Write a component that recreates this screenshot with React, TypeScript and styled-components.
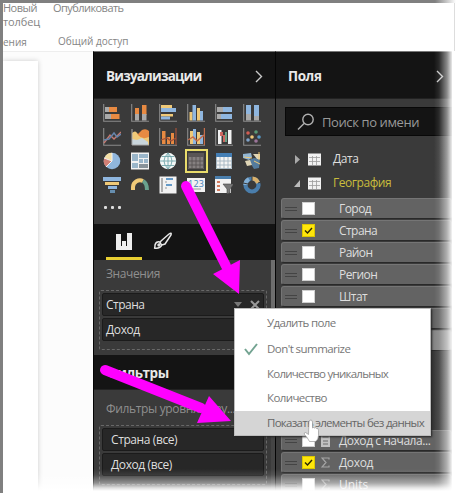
import React from "react";
import styled, { createGlobalStyle } from "styled-components";

const Global = createGlobalStyle`
  * { box-sizing: border-box; }
  html, body { margin: 0; padding: 0; background: #fff; overflow: hidden; }
  body { font-family: "Open Sans", "Noto Sans", sans-serif; font-size: 12px; }
`;

const Page = styled.div`
  position: relative;
  width: 458px;
  height: 493px;
  overflow: hidden;
  border-left: 3px solid #808080;
  display: flex;
  flex-direction: column;
`;
const TopEdge = styled.div`
  height: 3px;
  flex: none;
  background: linear-gradient(90deg, #808080 432px, #fff 453px);
`;
const Text = styled.span<{ $s?: number; $ls?: number }>`
  font-size: ${(p) => p.$s ?? 12}px;
  letter-spacing: ${(p) => p.$ls ?? 0}px;
  white-space: nowrap;
  line-height: 16px;
`;
const Ribbon = styled.div`
  height: 48px;
  flex: none;
  display: grid;
  grid-template-columns: 50px 200px;
  grid-template-rows: 14px 14px 20px;
  color: #858585;
  > span { margin-top: -3px; }
`;
const GroupRow = styled.div`
  grid-column: 1 / 3;
  display: flex;
  padding-top: 2px;
`;
const GroupLabel = styled.div<{ $w: number }>`
  width: ${(p) => p.$w}px;
`;
const Work = styled.div`
  display: flex;
  height: 442px;
`;
const Canvas = styled.div`
  width: 90px;
  background: #fcfcfc;
  border-top: 1px solid #eee;
  padding-top: 9px;
`;
const Sheet = styled.div`
  width: 35px;
  height: 440px;
  background: #fff;
  box-shadow: 0 0 5px #ccc;
`;
const Pane = styled.section<{ $w: number }>`
  width: ${(p) => p.$w}px;
  background: #3a3a3a;
  border-top: 1px solid #777;
  border-left: 1px solid #050505;
  display: flex;
  flex-direction: column;
  overflow: hidden;
`;
const Header = styled.header<{ $h: number; $end?: number }>`
  height: ${(p) => p.$h}px;
  flex: none;
  background: #141414;
  color: #e9e9e9;
  font-weight: 700;
  display: flex;
  align-items: center;
  justify-content: space-between;
  padding: 2px ${(p) => p.$end ?? 12}px 0 12px;
  border-bottom: 1px solid #222;
`;
const Gallery = styled.div`
  height: 125px;
  flex: none;
  padding: 2px 0 0 4px;
`;
const IconGrid = styled.div`
  display: grid;
  grid-template-columns: repeat(6, 28px);
  grid-auto-rows: 24px;
`;
const IconCell = styled.div<{ $on?: boolean }>`
  display: flex;
  align-items: center;
  justify-content: center;
  margin: 0 2.5px;
  outline: ${(p) => (p.$on ? "2px solid #e9dc6b" : "none")};
  outline-offset: -2px;
  svg { flex: none; }
`;
const Dots = styled.div`
  display: flex;
  gap: 4px;
  padding: 9px 0 0 6px;
  i { width: 3px; height: 3px; background: #ddd; border-radius: 1px; }
`;
const Tabs = styled.div`
  height: 36px;
  flex: none;
  background: #141414;
  display: flex;
  gap: 3px;
  padding-left: 12px;
`;
const Tab = styled.div<{ $on?: boolean }>`
  width: 36px;
  display: flex;
  justify-content: center;
  align-items: center;
  padding-top: 1px;
  border-bottom: 3px solid ${(p) => (p.$on ? "#e8cf32" : "transparent")};
`;
const Section = styled.div<{ $h: number; $top?: number }>`
  height: ${(p) => p.$h}px;
  flex: none;
  color: #8f8f8f;
  padding: ${(p) => p.$top ?? 5}px 4px 0 5px;
  border-right: 4px solid #6d6d6d;
`;
const QuietSection = styled(Section)`
  border-right-color: #444;
`;
const Caption = styled.div`
  padding-left: 7px;
  height: 25px;
`;
const Well = styled.div`
  border: 1px dashed #686868;
  height: 60px;
  padding: 2px;
  border-radius: 2px;
  display: flex;
  flex-direction: column;
  gap: 2px;
`;
const WellItem = styled.div<{ $indent?: number }>`
  height: 23px;
  flex: none;
  background: #272727;
  border: 1px solid #1b1b1b;
  border-radius: 2px;
  color: #dedede;
  display: flex;
  align-items: center;
  padding: 0 3px 0 ${(p) => p.$indent ?? 3}px;
  span { flex: 1; }
  svg { margin-left: 8px; }
`;
const Search = styled.div`
  height: 29px;
  flex: none;
  margin: 8px 0 0 9px;
  background: #141414;
  border: 1px solid #080808;
  display: flex;
  align-items: center;
  gap: 7px;
  padding: 0 11px;
  color: #999;
`;
const Tables = styled.div`
  padding: 11px 0 3px 18px;
`;
const TableRow = styled.div<{ $on?: boolean }>`
  height: 24px;
  display: flex;
  align-items: center;
  color: ${(p) => (p.$on ? "#c9bd3c" : "#dedede")};
  svg:nth-child(2) { margin: 0 12px 0 8px; }
`;
const FieldList = styled.div<{ $top?: number }>`
  margin: ${(p) => p.$top ?? 0}px 0 0 5px;
  display: flex;
  flex-direction: column;
  gap: 1px;
`;
const Field = styled.div<{ $light?: boolean }>`
  height: 21px;
  background: ${(p) => (p.$light ? "#858585" : "#636363")};
  border: 1px solid #757575;
  border-bottom-color: #292929;
  border-radius: 3px;
  display: flex;
  align-items: center;
  padding-left: 3px;
  color: #dedede;
`;
const Grip = styled.i`
  width: 12px;
  height: 4px;
  border-top: 1px solid #444;
  border-bottom: 1px solid #444;
`;
const Box = styled.span<{ $on?: boolean }>`
  width: 13px;
  height: 13px;
  margin: 0 6px 0 5px;
  background: ${(p) => (p.$on ? "#ffe60b" : "#fff")};
  border: 1px solid ${(p) => (p.$on ? "#dcc700" : "#d0d0d0")};
  display: flex;
`;
const Kind = styled.span`
  width: 18px;
  display: flex;
`;
const Menu = styled.div`
  position: absolute;
  left: 231px;
  top: 308px;
  width: 197px;
  height: 128px;
  background: #fff;
  border: 1px solid #bcbcbc;
  box-shadow: 1px 1px 2px #222;
  color: #777;
`;
const MenuItem = styled.div<{ $h: number; $on?: boolean }>`
  height: ${(p) => p.$h}px;
  display: grid;
  grid-template-columns: 32px 162px;
  align-items: center;
  background: ${(p) => (p.$on ? "#d5d5d5" : "#fff")};
  color: ${(p) => (p.$on ? "#666" : "#777")};
  > span { grid-column: 2; }
  > svg { grid-column: 1; grid-row: 1; margin-left: 9px; }
`;
const Overlay = styled.svg`
  position: absolute;
  left: -3px;
  top: 0;
`;
const FadeRight = styled.div`
  position: absolute;
  right: 0;
  top: 51px;
  width: 24px;
  height: 442px;
  background: linear-gradient(90deg, #fff0, #ffffff18 5px, #ffffff80 13px, #ffffffe8 18px, #fff 21px);
`;
const RightLine = styled.div`
  position: absolute;
  right: 3px;
  top: 3px;
  width: 1px;
  height: 48px;
  background: #ddd;
`;
const FadeBottom = styled.div`
  position: absolute;
  left: 0;
  right: 0;
  bottom: 0;
  height: 24px;
  background: linear-gradient(#fff0, #ffffff18 6px, #ffffff70 14px, #ffffffd8 19px, #fff 22px);
`;

const G = "#aaa", O = "#e88a42", B = "#8fb6df", Y = "#efc978", W = "#f2f2f2", D = "#4a7eac";
type Rect = [number, number, number, number, string];
const Bars = ({ r, children }: { r: Rect[]; children?: React.ReactNode }) => (
  <svg width="18" height="18" viewBox="0 0 18 18">
    <path d="M.7 0v17.3H18" fill="none" stroke="#8b8b8b" strokeWidth="1.1" />
    {r.map(([x, y, w, h, c], i) => <rect key={i} x={x} y={y} width={w} height={h} fill={c} />)}
    {children}
  </svg>
);
const Pic = ({ children }: { children: React.ReactNode }) => (
  <svg width="18" height="18" viewBox="0 0 18 18">{children}</svg>
);
const GridPic = ({ head, fill, line }: { head: string; fill: string; line: string }) => (
  <Pic>
    <path d="M1 1h16v16H1z" fill={fill} />
    <path d="M1 1h16v4H1z" fill={head} />
    <path d="M1.5 5v11.5h15V5M1 9h16M1 13h16M5 5v12M9 5v12M13 5v12" fill="none" stroke={line} strokeWidth=".9" />
  </Pic>
);

const icons: React.ReactNode[] = [
  <Bars r={[[2, 3, 4, 5, G], [6, 3, 8, 5, O], [2, 10, 6, 5, G], [8, 10, 8.5, 5, O]]} />,
  <Bars r={[[4, 4, 4, 7, O], [4, 10, 4, 6.5, G], [11, 1, 4.5, 10, O], [11, 10, 4.5, 6.5, G]]} />,
  <Bars r={[[2, 1, 11, 3, Y], [2, 4, 15, 4, B], [2, 10, 12, 2.5, Y], [2, 12.5, 9, 3, B]]} />,
  <Bars r={[[2.5, 8, 3, 8.5, Y], [5.5, 1, 3.5, 15.5, B], [10, 4, 3, 12.5, Y], [13, 7, 3, 9.5, B]]} />,
  <Bars r={[[2, 3, 6, 5, G], [8, 3, 9, 5, B], [2, 10, 4, 5, G], [6, 10, 11, 5, B]]} />,
  <Bars r={[[3, 1, 5, 9, B], [3, 10, 5, 6.5, G], [11, 1, 5, 11, B], [11, 12, 5, 4.5, G]]} />,
  <Bars r={[]}>
    <path d="m1 15 6-8 4 4 7-7" fill="none" stroke="#c47a71" strokeWidth="1.4" />
    <path d="m1 12 5-1 5-6 3 4 4-3" fill="none" stroke="#6685ac" strokeWidth="1.4" />
  </Bars>,
  <Pic>
    <path d="M1 8Q4 2 7 6l4-4q4-2 7 1v13H1z" fill={O} />
    <path d="M1 5q4-4 6 2 4 5 11 2v8H1z" fill={Y} />
    <path d="m1 11 5 1 5-2 6 4v3H1z" fill="#c9d6dc" />
    <path d="M1 1v16h17" fill="none" stroke={G} />
  </Pic>,
  <Bars r={[[3, 3, 3.5, 13, O], [8, 9, 3, 7, O], [12, 5, 3, 11, O]]}>
    <path d="m2 12 6-2 4 3 5-3M17 0v17" fill="none" stroke="#a45138" strokeWidth="1.2" />
  </Bars>,
  <Bars r={[[3, 3, 3, 13, Y], [6, 1, 3, 15, B], [10, 4, 3, 12, Y], [13, 7, 3, 9, B]]}>
    <path d="m1 12 5-3 4 4 7-6M17.5 0v17" fill="none" stroke="#c66c49" strokeWidth="1.4" />
  </Bars>,
  <Bars r={[[3, 2, 3.5, 14, W], [5, 4, 3, 4, "#cc6760"], [8, 7, 2, 7, "#cc6760"], [10, 4, 2, 10, "#69a086"], [13, 2, 3.5, 14, W]]} />,
  <Bars r={[]}>
    {[[5, 5, "#d05c52"], [13, 4, "#589976"], [9, 9, Y], [16, 9, "#5799c6"], [5, 12, "#7fa2c8"], [13, 13, "#9b759a"]].map(([x, y, c], i) => (
      <circle key={i} cx={x} cy={y} r="1.8" fill={c as string} />
    ))}
  </Bars>,
  <Pic>
    <circle cx="9" cy="9" r="8.3" fill="#90b6dc" />
    <path d="M9 9V.7A8.3 8.3 0 0 0 1.4 6z" fill="#f4dfa6" />
    <path d="M9 9 1.4 6A8 8 0 0 0 3 14.8z" fill="#d17f75" />
    <path d="M9 1v8l-6 6M9 9 1 6" stroke={W} fill="none" />
  </Pic>,
  <Pic>
    <path d="M0 .5h18v17H0z" fill={W} />
    <path d="M1 2h6v7H1zm7 0h9v4H8zM1 11h6v5H1zm7-4h4v4H8zm5 0h4v4h-4z" fill="#9ab6ca" />
    <path d="M8 12h9v4H8z" fill="#89939a" />
  </Pic>,
  <Pic>
    <circle cx="9" cy="9" r="8.2" fill="#f4f8f7" />
    <path d="M1 9h16M3 4.5h12M3 13.5h12M9 1v16M9 1q-8 8 0 16M9 1q8 8 0 16" stroke="#6fa5a9" fill="none" strokeWidth=".9" />
  </Pic>,
  <GridPic head="#595555" fill="#858080" line="#575353" />,
  <GridPic head="#457fb5" fill="#f4f4f4" line="#a1b3c0" />,
  <Pic>
    <path d="m0 2 8-1 1 4-3 3-6-2z" fill="#91b5d3" />
    <path d="m6 8 5-2 6 1-1 9-5 1-3-5z" fill="#547b9d" />
    <path d="m2 9 5-1 2 5-5 1zM10 2h7v5h-3z" fill="#dfd5b6" />
    <path d="M16 0v8m-5 1 6 3M1 5l8 1" stroke={Y} />
  </Pic>,
  <Pic>
    <path d="M0 1h18v4H0z" fill={B} /><path d="M2 6h14v3H2z" fill={Y} />
    <path d="M5 10h9v3H5z" fill={B} /><path d="M7 14h5v3H7z" fill="#668eaf" />
  </Pic>,
  <Pic>
    <path d="M2 14v-3a7 7 0 0 1 10-6" fill="none" stroke={Y} strokeWidth="4" />
    <path d="M12 5q4 2 4 9" fill="none" stroke="#69a18e" strokeWidth="4" />
  </Pic>,
  <Pic>
    <path d="M.5.5h17v17H.5z" fill={W} /><path d="M3 2v14" stroke="#999" strokeWidth="1.5" />
    <path d="M7 3h7M7 9h6" stroke="#659ac7" strokeWidth="1.8" /><path d="M7 5v2m0 4v2" stroke="#999" />
  </Pic>,
  <svg width="18" height="18" viewBox="0 0 18 18">
    <path d="M0 2h18v14H0z" fill={W} />
    <text x="1" y="10.5" fontSize="9" fontFamily="Open Sans" fill="#4380b9" textLength="16">123</text>
    <path d="M4 13h10" stroke="#999" />
  </svg>,
  <Pic>
    <path d="M0 0h16v17H0z" fill={W} /><path d="M0 0h16v3H0z" fill={D} />
    <path d="M2 6h3m-3 4h3m-3 4h3" stroke="#d37b5d" strokeWidth="2" />
    <path d="M8 8h11l-4 5v4l-3 1v-5z" fill="#777" stroke="#444" strokeWidth=".6" />
  </Pic>,
  <Pic>
    <circle cx="9" cy="9" r="6.5" fill="none" stroke={D} strokeWidth="4.2" />
    <path d="M9 2.5A6.5 6.5 0 0 1 15 7" fill="none" stroke="#d9b16c" strokeWidth="4.2" />
    <path d="M2.5 9A6.5 6.5 0 0 1 6 3" fill="none" stroke="#82aed4" strokeWidth="4.2" />
    <path d="M9 0v5m6 2 3-1M0 7l5 1" stroke="#3a3a3a" />
  </Pic>,
];

const Chevron = () => (
  <svg width="8" height="13" viewBox="0 0 8 13"><path d="m1 1 5.5 5.5L1 12" stroke="#c9c9c9" fill="none" strokeWidth="1.4" /></svg>
);
const TableIcon = () => (
  <svg width="13" height="13" viewBox="0 0 13 13">
    <path d="M0 .5h13v12H0z" fill="#f1f1f1" />
    <path d="M1 4.5h11M1 8.5h11M4.5 3v9M8.5 3v9" stroke="#9c9c9c" strokeWidth=".8" />
  </svg>
);
const Sigma = () => (
  <svg width="9" height="11" viewBox="0 0 9 11"><path d="M8 2.5V1H1l4 4.5L1 10h7V8.5" stroke="#a5a5a5" fill="none" strokeWidth="1.2" /></svg>
);
const Calc = () => (
  <svg width="9" height="12" viewBox="0 0 9 12"><path d="M0 0h9v12H0z" fill="#c2c2c2" /><path d="M1.5 2h6M2 6h5M2 9h5" stroke="#6a6a6a" /></svg>
);

function FieldRow({ name, on, ls = -0.55, kind, light }: {
  name: string; on?: boolean; ls?: number; kind?: React.ReactNode; light?: boolean;
}) {
  return (
    <Field $light={light}>
      <Grip />
      <Box $on={on}>
        {on && <svg width="11" height="11" viewBox="0 0 11 11"><path d="m2 5.5 2.5 2.5L9 3" stroke="#2b2600" fill="none" strokeWidth="1.4" /></svg>}
      </Box>
      <Kind>{kind}</Kind>
      <Text $ls={ls}>{name}</Text>
    </Field>
  );
}

export default function App() {
  return (
    <>
      <Global />
      <Page>
        <TopEdge />
        <Ribbon>
          <Text $s={11} $ls={-0.5}>Новый</Text>
          <Text $s={11} $ls={-0.55}>Опубликовать</Text>
          <Text $s={11} $ls={-0.1}>толбец</Text>
          <GroupRow>
            <GroupLabel $w={55}><Text $s={10}>ения</Text></GroupLabel>
            <Text $s={10}>Общий доступ</Text>
          </GroupRow>
        </Ribbon>
        <Work>
          <Canvas><Sheet /></Canvas>
          <Pane $w={182}>
            <Header $h={47}><Text $s={13.5} $ls={-0.8}>Визуализации</Text><Chevron /></Header>
            <Gallery>
              <IconGrid>
                {icons.map((icon, i) => <IconCell key={i} $on={i === 15}>{icon}</IconCell>)}
              </IconGrid>
              <Dots><i /><i /><i /></Dots>
            </Gallery>
            <Tabs>
              <Tab $on>
                <svg width="16" height="17" viewBox="0 0 16 17"><path d="M0 1h5v12h1V8h4v5h1V0h5v17H0z" fill="#eee" /></svg>
              </Tab>
              <Tab>
                <svg width="20" height="18" viewBox="0 0 20 18" fill="none" stroke="#e8e8e8" strokeWidth="1.5">
                  <path d="M8 9 16 2q3-2 2 1l-6 9-3 1-2-2zM7 10q-4-1-5 3 0 3-1 3 6 1 8-3" /><circle cx="6" cy="13" r="1" />
                </svg>
              </Tab>
            </Tabs>
            <Section $h={95}>
              <Caption><Text $ls={-0.4}>Значения</Text></Caption>
              <Well>
                <WellItem>
                  <Text $ls={-0.5}>Страна</Text>
                  <svg width="8" height="5"><path d="M0 0h8L4 5z" fill="#777" /></svg>
                  <svg width="10" height="10" viewBox="0 0 10 10"><path d="m1 1 8 8m0-8-8 8" stroke="#999" strokeWidth="2" /></svg>
                </WellItem>
                <WellItem><Text $ls={-0.4}>Доход</Text></WellItem>
              </Well>
            </Section>
            <Header $h={35}><Text $s={13.5} $ls={-0.45}>Фильтры</Text></Header>
            <QuietSection $h={105} $top={10}>
              <Caption><Text $ls={-0.35}>Фильтры уровня визу...</Text></Caption>
              <Well>
                <WellItem $indent={8}><Text $ls={-0.4}>Страна (все)</Text></WellItem>
                <WellItem $indent={8}><Text $ls={-0.4}>Доход (все)</Text></WellItem>
              </Well>
            </QuietSection>
          </Pane>
          <Pane $w={177}>
            <Header $h={47} $end={8}><Text $s={13.5} $ls={-0.4}>Поля</Text><Chevron /></Header>
            <Search>
              <svg width="18" height="18" viewBox="0 0 18 18" fill="none" stroke="#b0b0b0" strokeWidth="1.4"><circle cx="11" cy="6.5" r="5.2" /><path d="m7 10.5-6 6" /></svg>
              <Text $s={13} $ls={-0.4}>Поиск по имени</Text>
            </Search>
            <Tables>
              <TableRow><svg width="6" height="9"><path d="M1 0v9l5-4.5z" fill="#aaa" /></svg><TableIcon /><Text $ls={-0.4}>Дата</Text></TableRow>
              <TableRow $on><svg width="6" height="9"><path d="M6 1v7H0z" fill="#bbb" /></svg><TableIcon /><Text $ls={-0.45}>География</Text></TableRow>
            </Tables>
            <FieldList>
              <FieldRow name="Город" />
              <FieldRow name="Страна" on />
              <FieldRow name="Район" />
              <FieldRow name="Регион" />
              <FieldRow name="Штат" />
              <FieldRow name="" />
              <FieldRow name="" light />
            </FieldList>
            <FieldList $top={79}>
              <FieldRow name="Доход с начала..." kind={<Calc />} ls={-0.45} />
              <FieldRow name="Доход" on kind={<Sigma />} ls={-0.35} />
              <FieldRow name="Units" kind={<Sigma />} ls={0} />
            </FieldList>
          </Pane>
        </Work>
        <RightLine />
        <FadeRight />
        <FadeBottom />
        <Menu>
          <MenuItem $h={27}><Text $s={11.5} $ls={-0.65}>Удалить поле</Text></MenuItem>
          <MenuItem $h={26}>
            <svg width="14" height="13" viewBox="0 0 14 13"><path d="m1 6 4 5 8-10" stroke="#73a391" strokeWidth="2" fill="none" /></svg>
            <Text $s={11.5} $ls={-0.55}>Don't summarize</Text>
          </MenuItem>
          <MenuItem $h={23}><Text $s={11.5} $ls={-0.75}>Количество уникальных</Text></MenuItem>
          <MenuItem $h={26}><Text $s={11.5} $ls={-0.6}>Количество</Text></MenuItem>
          <MenuItem $h={24} $on><Text $s={11.5} $ls={-0.72}>Показать элементы без данных</Text></MenuItem>
        </Menu>
        <Overlay width="458" height="493" viewBox="0 0 458 493">
          <g stroke="#f0f" strokeWidth="10" strokeLinecap="round" fill="#f0f">
            <path d="m186 186 40 80M105 370l96 38" />
            <path d="m213 274 27-14-1 34zM209 396l-12 27 34-2z" stroke="none" />
          </g>
          <path d="M309 422q0-2 2-2 1 0 1.5 2v6q1-1 2 0 1-1 2 .5 2-1 2 2v5q0 4-3 6h-6q-2-4-5-7-1-2 1-2l3 2z" fill="#fff" stroke="#888" strokeWidth=".6" />
        </Overlay>
      </Page>
    </>
  );
}
